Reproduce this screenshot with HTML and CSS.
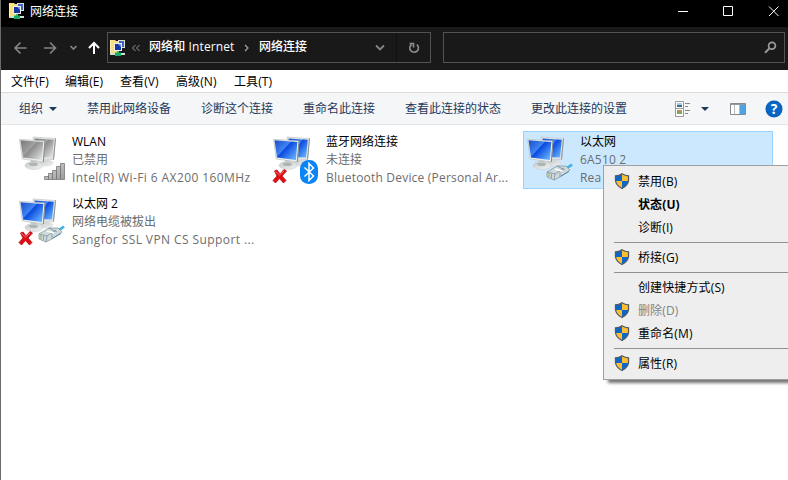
FILE: index.html
```html
<!DOCTYPE html>
<html lang="zh-CN">
<head>
<meta charset="utf-8">
<title>网络连接</title>
<link rel="stylesheet" href="styles.css">
</head>
<body>
<svg class="defs" width="0" height="0" aria-hidden="true">
  <defs>
    <linearGradient id="blue" x1="0" y1="0" x2="1" y2=".8"><stop offset="0" stop-color="#1a4fc4"/><stop offset=".45" stop-color="#3f83f2"/><stop offset=".5" stop-color="#0a49df"/><stop offset="1" stop-color="#63b0ff"/></linearGradient>
    <linearGradient id="gray" x1="0" y1="0" x2="1" y2=".8"><stop offset="0" stop-color="#777"/><stop offset=".45" stop-color="#a0a0a0"/><stop offset=".5" stop-color="#8c8c8c"/><stop offset="1" stop-color="#dedede"/></linearGradient>
    <linearGradient id="base" x1="0" y1="0" x2="1" y2="1"><stop offset="0" stop-color="#c4c8c8"/><stop offset="1" stop-color="#f2f2f2"/></linearGradient>
    <linearGradient id="bar" x1="0" y1="0" x2="1" y2="1"><stop offset="0" stop-color="#ddd"/><stop offset="1" stop-color="#999"/></linearGradient>
    <g id="screens">
      <ellipse cx="27" cy="28" rx="7" ry="3" fill="url(#base)" stroke="#d0d3d3" stroke-width=".5"/>
      <path d="M14 2 36.500 3.500 34.500 24.500 17 24Z" fill="#e4e7e7" stroke="#bcc0c0" stroke-width=".6"/>
      <path d="M36.500 3.500 34.500 24.500" stroke="#8d9292" stroke-width="1"/>
      <path d="M15.500 3.500 34.800 4.800 33 22.500 18 22Z" fill="var(--screen)"/>
      <path d="M12 24h6v4h-6z" fill="#bfc3c3"/>
      <ellipse cx="15" cy="30.500" rx="9" ry="4" fill="url(#base)" stroke="#c4c8c8" stroke-width=".5"/>
      <ellipse cx="14.500" cy="29.300" rx="4.500" ry="1.800" fill="#aeb4b4"/>
      <path d="M.5 4.300 26 6 24.300 27 3.300 24Z" fill="#edf0f0" stroke="#b4b9b9" stroke-width=".6"/>
      <path d="M26 6 24.300 27" stroke="#858b8b" stroke-width="1"/>
      <path d="M1.500 5.300 24.300 7 22.900 25 4 22.500Z" fill="var(--screen)"/>
    </g>
    <g id="cross"><path d="M1.500 3 4 2 7 6 11 1.500 13.500 3 9 8 13 12.500 10.500 15 6.500 10.500 2.500 15 0 12.500 4 8Z" fill="#e20d14" stroke="#b50b10" stroke-width=".8"/><path d="M2.500 3.500 6.500 7 11 3" fill="none" stroke="#f87676" stroke-width="1"/></g>
    <g id="plug">
      <path d="M19 5Q23 4.500 26 1.500" stroke="#40b3df" stroke-width="2.500" fill="none"/>
      <path d="M1 9 11 3 20 3 24 7 14 14 8 17 1 14Z" fill="#cfdadc" stroke="#7c909b" stroke-width=".7"/>
      <path d="M1 9 9 11 18 5M9 11 8 17M11 3 19 7M14 8V14" stroke="#718796" fill="none" stroke-width=".7"/>
      <path d="M3 10V14M5.500 11V15" stroke="#a3a83e" stroke-width="1"/><path d="M9 6 16 8" stroke="#fff" stroke-width="1.500"/><path d="M15 13 23 8.500" stroke="#5685ad" stroke-width="1"/>
    </g>
    <g id="net">
      <path d="M0 0H5L6 1H9V13H0Z" fill="#f7df86"/><path d="M.5 0V13" stroke="#fff1b2"/>
      <path d="M8 0H15V8H8Z" fill="#dedfd1"/><path d="M9 1H14V7H9Z" fill="#4062c4"/>
      <path d="M4 3H12V11H4Z" fill="#f0efdf"/><path d="M5 4H11V10H5Z" fill="#1535aa"/><path d="M8 4H11V7Z" fill="#7799ee"/>
      <path d="M7 11H9V13H7Z" fill="#55b878"/><path d="M0 13H15V15H0Z" fill="#cce0d3"/><path d="M5 12.500H11V16H5Z" fill="#16ad68"/>
    </g>
    <g id="shield"><path d="M8 .8Q11 2.800 14.500 2.800V7.500Q14 12.500 8 15.500 2 12.500 1.500 7.500V2.800Q5 2.800 8 .8Z" fill="#ffbd32"/><path d="M8 1Q5 2.800 1.500 2.800V8H8ZM8 8H14.500Q13.500 12.800 8 15.500Z" fill="#0b68cb"/><path d="M8 .8Q11 2.800 14.500 2.800V7.500Q14 12.500 8 15.500 2 12.500 1.500 7.500V2.800Q5 2.800 8 .8Z" fill="none" stroke="#525a60" stroke-width="1.300"/></g>
  </defs>
</svg>

<div class="window">
  <header class="titlebar">
    <svg class="app-icon" width="16" height="16"><use href="#net"/></svg>
    <span class="title">网络连接</span>
    <svg class="controls" width="103" height="16" fill="none" stroke="#fff"><path d="M1 8.500H11M46.500 3.500H55.500V12.500H46.500ZM92 3.500 101.500 13M101.500 3.500 92 13"/></svg>
  </header>

  <nav class="navbar">
    <svg class="history" width="88" height="20" fill="none" stroke="#858585" stroke-width="1.700"><path d="M13.500 10H2M7.500 4.500 2 10 7.500 15.500M31 10H42.500M37 4.500 42.500 10 37 15.500"/><path d="M57.500 8 60.500 11 63.500 8" stroke-width="1.700"/><path d="M81 16V5M76 10 81 5 86 10" stroke="#fff" stroke-width="2"/></svg>
    <div class="address">
      <svg width="16" height="16"><use href="#net"/></svg>
      <svg class="chev" width="8" height="8" fill="none" stroke="#999"><path d="M3.500 1 .5 4 3.500 7M7.500 1 4.500 4 7.500 7"/></svg>
      <span class="crumb first">网络和 Internet</span>
      <svg class="sep" width="5" height="8" fill="none" stroke="#a3a3a3" stroke-width="1.200"><path d="M1 1 4 4 1 7"/></svg>
      <span class="crumb">网络连接</span>
      <svg class="drop" width="10" height="8" fill="none" stroke="#858585" stroke-width="1.800"><path d="M1 1.500 5 5.500 9 1.500"/></svg>
      <div class="refresh"><svg width="12" height="12" fill="none" stroke="#8b8b8b" stroke-width="1.700"><path d="M8.800 2.600A4.300 4.300 0 1 1 3.600 2.500M1.500 1.500H5.500V5.500"/></svg></div>
    </div>
    <div class="search"><svg width="13" height="13" fill="none" stroke="#999" stroke-width="1.700"><circle cx="8" cy="4.800" r="3.400"/><path d="M5.500 7.300 1 11.800" stroke-width="2"/></svg></div>
  </nav>

  <div class="menubar"><span>文件(F)</span><span>编辑(E)</span><span>查看(V)</span><span>高级(N)</span><span>工具(T)</span></div>

  <div class="toolbar">
    <span class="organize">组织<i class="caret"></i></span><span>禁用此网络设备</span><span>诊断这个连接</span><span>重命名此连接</span><span>查看此连接的状态</span><span>更改此连接的设置</span>
    <div class="tools">
      <svg width="16" height="16"><path d="M.5.5H8.500V15.500H.5ZM.5 7.500H8.500" fill="#fff" stroke="#999"/><path d="M2 2H7V4H2Z" fill="#a6caeb"/><path d="M2 4H7V6H2Z" fill="#327481"/><path d="M2 9H7V13H2Z" fill="#80a65d"/><path d="M5 9H7V11H5Z" fill="#d4865e"/><path d="M10 2.500H15M10 5.500H13M10 9.500H15M10 12.500H13" stroke="#888"/></svg>
      <i class="caret"></i>
      <svg class="pane" width="16" height="12"><path d="M.5.5H15.500V11.500H.5Z" fill="#fff" stroke="#858b91"/><path d="M1 1H15V2H1Z" fill="#929aa1"/><path d="M9 2H15V11H9Z" fill="#4da3e3"/><path d="M4.500 2V11M9.500 2V11" stroke="#b6babd"/></svg>
      <span class="help">?</span>
    </div>
  </div>

  <main class="connections">
    <article class="item">
      <svg class="icon disabled" width="50" height="50"><use href="#screens"/><g fill="url(#bar)" stroke="#777" stroke-width=".8"><path d="M25.500 41.500H29.500V44.500H25.500ZM29.500 38.500H33.500V44.500H29.500ZM33.500 35.500H37.500V44.500H33.500ZM37.500 31.500H41.500V44.500H37.500ZM41.500 28.500H45.500V44.500H41.500Z"/></g></svg>
      <div class="info"><div class="name">WLAN</div><div>已禁用</div><div class="device wide">Intel(R) Wi-Fi 6 AX200 160MHz</div></div>
    </article>
    <article class="item">
      <svg class="icon" width="50" height="50"><use href="#screens"/><use href="#cross" y="33"/><rect x="27" y="25" width="18" height="24" rx="8.500" fill="#0b84f5"/><path d="M31.500 32.500 40.500 41 36 45.500V28.500L40.500 33 31.500 41.500" fill="none" stroke="#fff" stroke-width="1.500"/></svg>
      <div class="info"><div class="name">蓝牙网络连接</div><div>未连接</div><div class="device">Bluetooth Device (Personal Ar...</div></div>
    </article>
    <article class="item selected">
      <svg class="icon" width="50" height="50"><use href="#screens"/><use href="#plug" x="19" y="28"/></svg>
      <div class="info"><div class="name">以太网</div><div class="device">6A510 2</div><div class="device">Rea</div></div>
    </article>
    <article class="item">
      <svg class="icon" width="50" height="50"><use href="#screens"/><use href="#cross" y="33"/><use href="#plug" x="19" y="28"/></svg>
      <div class="info"><div class="name">以太网 2</div><div>网络电缆被拔出</div><div class="device wide">Sangfor SSL VPN CS Support ...</div></div>
    </article>
  </main>

  <div class="context-menu">
    <div class="entry"><svg width="16" height="16"><use href="#shield"/></svg>禁用(B)</div>
    <div class="entry default">状态(U)</div>
    <div class="entry">诊断(I)</div>
    <hr>
    <div class="entry"><svg width="16" height="16"><use href="#shield"/></svg>桥接(G)</div>
    <hr>
    <div class="entry">创建快捷方式(S)</div>
    <div class="entry off"><svg width="16" height="16"><use href="#shield"/></svg>删除(D)</div>
    <div class="entry"><svg width="16" height="16"><use href="#shield"/></svg>重命名(M)</div>
    <hr>
    <div class="entry"><svg width="16" height="16"><use href="#shield"/></svg>属性(R)</div>
  </div>
</div>
</body>
</html>
```
FILE: styles.css
```css
* { box-sizing: border-box; }
body { margin: 0; overflow: hidden; font: 12px/18px "Open Sans", "Noto Sans CJK SC", sans-serif; color: #000; }
svg { display: block; flex: none; overflow: visible; }
.defs { position: absolute; }
.window { position: relative; width: 788px; height: 480px; overflow: hidden; background: #fff; border-left: 1px solid #6b6b6b; display: flex; flex-direction: column; white-space: nowrap; }

.titlebar { height: 27px; margin-left: -1px; background: #000; color: #fff; display: flex; padding: 3px 8px 0 9px; flex: none; }
.title { margin-left: 5px; }
.controls { margin-left: auto; }

.navbar { height: 43px; background: #191919; display: flex; align-items: flex-start; padding: 5px 3px 0 12px; flex: none; }
.history { margin-top: 6px; }
.address { width: 324px; height: 31px; margin-left: 6px; border: 1px solid #535353; display: flex; align-items: center; padding-left: 2px; color: #fff; font-weight: 500; }
.address .chev { margin-left: 6px; margin-right: 1px; }
.crumb.first { margin-left: 8px; width: 86px; letter-spacing: .11px; }
.crumb { position: relative; top: -1px; }
.sep { margin: 0 10px 0 9px; }
.drop { margin-left: auto; }
.refresh { width: 34px; height: 29px; margin-left: 11px; border-left: 1px solid #101010; display: flex; align-items: center; justify-content: center; }
.search { width: 342px; height: 31px; margin-left: 12px; border: 1px solid #535353; display: flex; align-items: center; justify-content: flex-end; padding-right: 7px; }

.menubar { height: 22px; display: grid; grid-template-columns: 54px 55px 56px 58px auto; padding: 3px 0 0 10px; flex: none; letter-spacing: .1px; }

.toolbar { height: 33px; background: #f5f6f7; border-top: 1px solid #dadbdc; border-bottom: 1px solid #e5e6e7; color: #1e395b; display: flex; align-items: center; gap: 30px; padding: 0 6px 0 18px; flex: none; }
.organize { display: flex; align-items: center; gap: 6px; }
.caret { width: 0; height: 0; border: 4px solid transparent; border-top-color: #1e395b; border-bottom: 0; }
.tools { margin-left: auto; display: flex; align-items: center; }
.tools .caret { margin-left: 10px; }
.pane { margin-left: 21px; }
.help { width: 16px; height: 16px; margin-left: 20px; border-radius: 50%; background: #0867c5; box-shadow: 0 0 0 .5px #07509a; color: #fff; font-weight: 700; font-size: 14px; line-height: 16px; text-align: center; }

.connections { display: grid; grid-template-columns: repeat(3, 250px); grid-auto-rows: 58px; gap: 4px; padding: 6px 0 0 14px; }
.item { display: flex; padding: 2px 0 0 4px; color: #6d6d6d; --screen: url(#blue); min-width: 0; overflow: hidden; }
.selected { background: #cce8ff; box-shadow: inset 0 0 0 1px #99d1ff; }
.icon { margin-top: 2px; }
.disabled { --screen: url(#gray); }
.info { margin-left: 3px; }
.name { color: #000; }
.device { letter-spacing: .2px; }
.device.wide { letter-spacing: .41px; }

.context-menu { position: absolute; left: 602px; top: 165px; width: 220px; height: 215px; padding: 4px 0; background: #eee; border: 1px solid #a0a0a0; box-shadow: 4px 4px 3px -1px rgba(0, 0, 0, .55); }
.entry { height: 23px; display: flex; align-items: center; padding-left: 34px; letter-spacing: .12px; }
.entry svg { margin: -2px 8px 0 -24px; }
.default { font-weight: 700; }
.off { color: #838383; }
hr { height: 1px; margin: 3px 0 3px 10px; border: 0; background: #919191; }
```
